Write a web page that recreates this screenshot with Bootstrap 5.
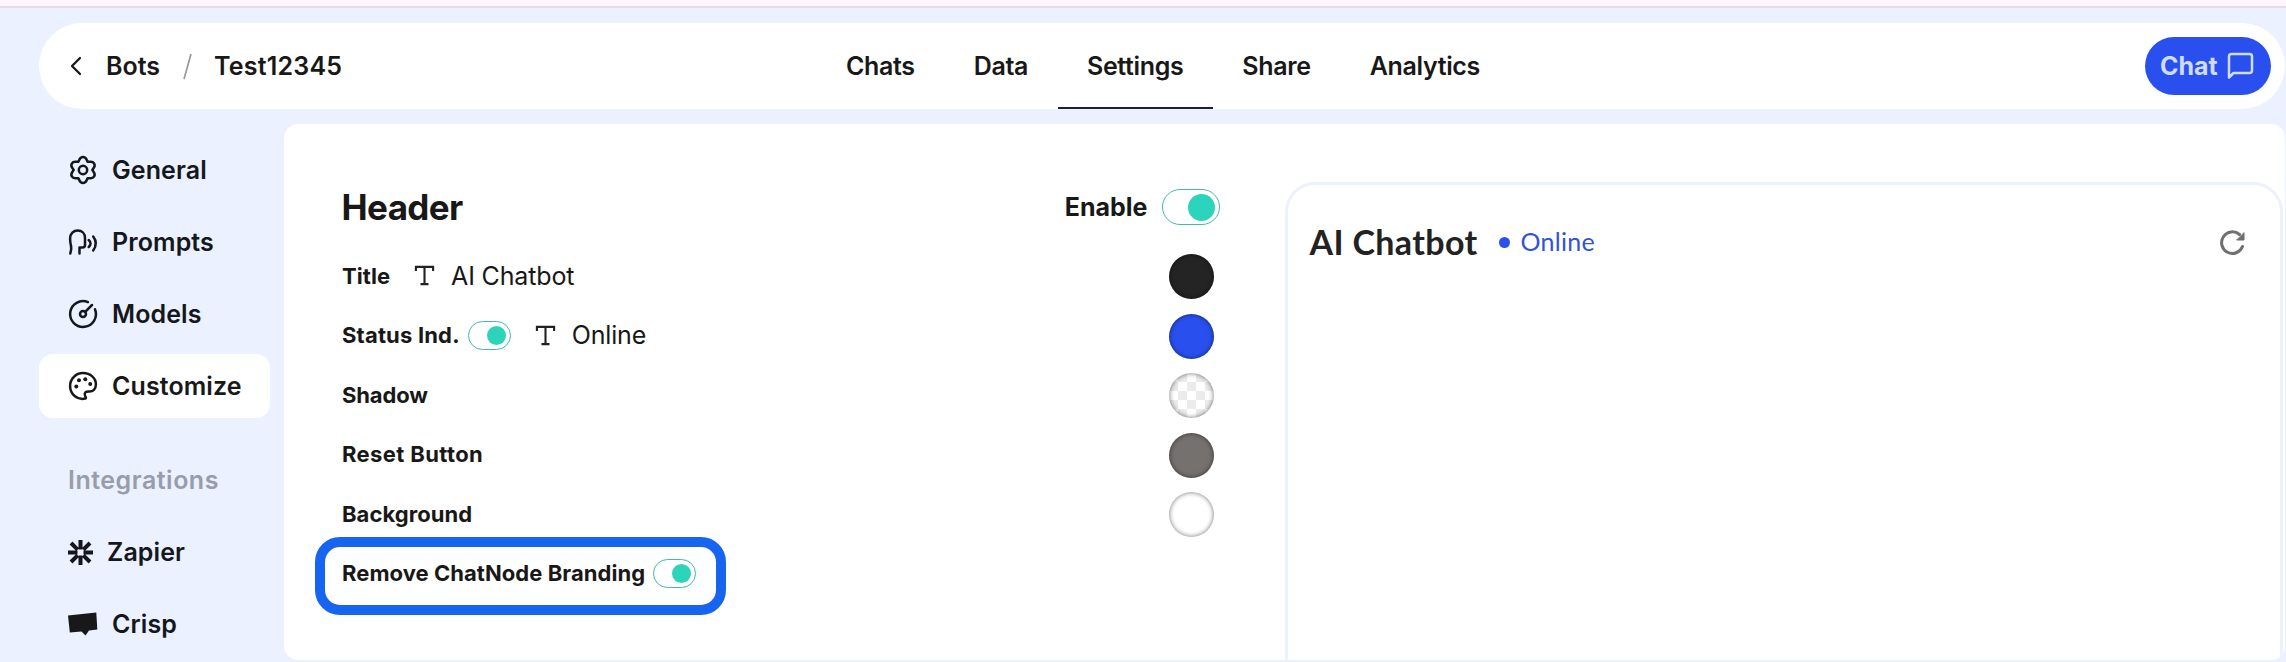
<!doctype html>
<html lang="en">
<head>
<meta charset="utf-8">
<title>Test12345 – Settings</title>
<link href="https://cdn.jsdelivr.net/npm/bootstrap@5.3.0/dist/css/bootstrap.min.css" rel="stylesheet">
<style>
  body { font-family: Inter, "Liberation Sans", sans-serif; font-size: 25px; line-height: 1.2; color: #181818; background: #ebf1fe; height: 662px; overflow: hidden; }
  svg { display: block; flex: none; overflow: visible; }
  .ico { fill: none; stroke: currentColor; stroke-width: 2.5; stroke-linecap: round; stroke-linejoin: round; }
  .strip { height: 8px; background: #fdf6fe; border-bottom: 2px solid #e5dce9; }
  .topbar { display: grid; grid-template-columns: 777.5px auto 1fr; height: 86px; margin: 15px 1px 0 39px; border-radius: 43px; background: #fff; }
  .crumbs { padding-left: 32px; font-weight: 600; gap: 23px; }
  .crumbs .ico { margin-right: 2px; stroke-width: 2.3; }
  .crumb-last { margin-left: -1px; letter-spacing: .2px; }
  .tabs a { padding: 0 29.5px; color: #181818; font-weight: 600; letter-spacing: -.35px; text-decoration: none; border-bottom: 2px solid transparent; border-top: 2px solid transparent; }
  .tabs a.active { border-bottom-color: #20202a; }
  .chat-btn { width: 126px; height: 58px; margin-right: 14px; padding: 0 18px 0 15px; border: 0; border-radius: 29px; background: #2950ef; color: #cfdcfd; font-size: 25px; font-weight: 700; }
  .workarea { padding: 15px 1.5px 0 39px; }
  .sidebar { width: 231px; margin-right: 14px; padding-top: 14px; gap: 8px; }
  .sidebar .item { height: 64px; padding-left: 30px; gap: 15px; border-radius: 14px; font-weight: 600; letter-spacing: .1px; color: #14171c; text-decoration: none; }
  .sidebar .item.zap { padding-left: 29px; gap: 14px; }
  .sidebar .item.active { background: #fff; color: #181818; }
  .sidebar .heading { height: 64px; margin-top: 22px; padding-left: 29px; font-weight: 600; letter-spacing: .5px; color: #979dab; }
  .panel { height: 536px; border-radius: 14px; background: #fff; padding-left: 58px; overflow: hidden; }
  .settings { width: 878px; padding-top: 51px; }
  .settings h1 { font-size: 35px; font-weight: 700; letter-spacing: -.6px; margin: 0 0 0 -.5px; }
  .titlerow { height: 64px; margin-bottom: 7px; }
  .enable { font-weight: 700; letter-spacing: 0; }
  .opt { position: relative; height: 59.5px; padding-right: 6px; }
  .opt .name { font-size: 22px; font-weight: 700; white-space: nowrap; letter-spacing: .05px; }
  .opt .name.tight { letter-spacing: -.15px; }
  .opt .name.wide { letter-spacing: .38px; }
  .opt .name.status { letter-spacing: .18px; }
  .tee { margin-left: 25px; fill: none; stroke: #222; stroke-width: 2.1; }
  .val { letter-spacing: -.15px; margin-left: 17px; }
  .switch { width: 43px; height: 29px; border: 1px solid #45b8a8; border-radius: 15px; padding-right: 4px; margin-left: 8px; }
  .switch i { width: 19px; height: 19px; border-radius: 50%; background: #2bd4bb; }
  .switch.big { width: 58px; height: 36px; border-radius: 18px; margin-left: 14.5px; }
  .switch.big i { width: 27px; height: 27px; }
  .swatch { width: 45px; height: 45px; margin-top: 1.5px; border-radius: 50%; box-shadow: inset 0 0 5px rgba(0,0,0,.55); }
  .sw-black { background: #242424; }
  .sw-blue { background: #2950ef; }
  .sw-gray { background: #74716e; }
  .sw-white { background: #fff; }
  .sw-clear { background: repeating-conic-gradient(#ebebeb 0 25%, #fff 0 50%) 0 0 / 18px 18px; }
  .ring { position: absolute; left: -27px; top: -7px; width: 411px; height: 78px; border: 10px solid #1664ef; border-radius: 25px; }
  .preview { margin: 58px 1.5px 0 65px; border: 3px solid #edf1fe; border-bottom: 0; border-radius: 30px 30px 0 0; font-family: Lato, sans-serif; }
  .preview-head { height: 114px; padding: 0 35px 0 21.5px; }
  .bot { font-size: 34px; font-weight: 700; letter-spacing: .35px; color: #222; }
  .bullet { width: 11px; height: 11px; border-radius: 50%; background: #2950ef; margin: 0 10px 0 22px; }
  .online { color: #3353d6; letter-spacing: .3px; margin-top: -2px; }
</style>
</head>
<body>
<div class="strip"></div>
<header class="topbar">
  <div class="crumbs d-flex align-items-center">
    <svg class="ico" width="10" height="18" viewBox="0 0 10 18"><path d="M9 1 1 9l8 8"/></svg>
    <span>Bots</span>
    <svg width="9" height="27" viewBox="0 0 9 27"><path d="M8 1 1 26" stroke="#999" stroke-width="1.7"/></svg>
    <span class="crumb-last">Test12345</span>
  </div>
  <nav class="tabs d-flex align-items-stretch">
    <a class="d-flex align-items-center" href="#">Chats</a>
    <a class="d-flex align-items-center" href="#">Data</a>
    <a class="d-flex align-items-center active" href="#">Settings</a>
    <a class="d-flex align-items-center" href="#">Share</a>
    <a class="d-flex align-items-center" href="#">Analytics</a>
  </nav>
  <div class="d-flex align-items-center justify-content-end">
    <button class="chat-btn d-flex align-items-center justify-content-between">Chat
      <svg class="ico" width="25" height="26" viewBox="0 0 25 26"><path d="M1 24.500V3.500Q1 1 3.500 1H21.500Q24 1 24 3.500V17.500Q24 20 21.500 20H5.500Z"/></svg>
    </button>
  </div>
</header>
<div class="workarea d-flex">
  <aside class="sidebar d-flex flex-column flex-shrink-0">
    <a class="item d-flex align-items-center" href="#">
      <svg class="ico" width="28" height="28" viewBox="-14 -14 28 28"><defs><path id="tooth" d="M-4.800-8.310C-3.400-9.120-3.900-12.900 0-12.900S3.400-9.120 4.800-8.310"/></defs><use href="#tooth"/><use href="#tooth" transform="rotate(60)"/><use href="#tooth" transform="rotate(120)"/><use href="#tooth" transform="rotate(180)"/><use href="#tooth" transform="rotate(240)"/><use href="#tooth" transform="rotate(300)"/><circle r="4.200"/></svg>
      General</a>
    <a class="item d-flex align-items-center" href="#">
      <svg class="ico" width="28" height="26" viewBox="0 0 28 26"><path d="M1.300 24.500C2.300 21 2.700 19 1.900 16.500C1.200 14 1.100 12 1.100 9.500C1.100 4.500 4.500 1.500 8.700 1.500C13 1.500 16 4.500 16 9V16Q16 18.500 13.500 18.500H10.500V24.500M19.700 11q3.700 3.300 0 7M24.200 7.500q5.200 6.800 0 14"/></svg>
      Prompts</a>
    <a class="item d-flex align-items-center" href="#">
      <svg class="ico" width="28" height="28" viewBox="0 0 28 28"><path d="M26 9.200A12.900 12.900 0 1 1 19 2.100M16.200 11.800 23 5"/><circle cx="14" cy="14" r="3"/></svg>
      Models</a>
    <a class="item active d-flex align-items-center" href="#">
      <svg class="ico" width="28" height="28" viewBox="0 0 28 28"><path d="M16.500 26.500C8 28.500 1.100 22 1.100 14A12.900 12.900 0 0 1 14 1.100C21.500 1.100 26.900 6 26.900 12.300C26.900 17 24 19.800 20 19.500C16.500 19.300 15 20.500 16 23.500C16.600 25.500 17.500 26.200 16.500 26.500Z"/><g fill="currentColor" stroke="none"><circle cx="10" cy="8.300" r="2"/><circle cx="16.300" cy="7.200" r="2"/><circle cx="21.200" cy="12" r="2"/><circle cx="7.300" cy="14.500" r="2"/></g></svg>
      Customize</a>
    <div class="heading d-flex align-items-center">Integrations</div>
    <a class="item zap d-flex align-items-center" href="#">
      <svg width="25" height="25" viewBox="-12.500 -12.500 25 25" stroke="currentColor" stroke-width="4"><path d="M0-12.500V-3M0 3V12.500M-12.500 0H-3M3 0H12.500M-9.500-9.500-2.800-2.800M2.800 2.800 9.500 9.500M-9.500 9.500-2.800 2.800M2.800-2.800 9.500-9.500"/></svg>
      Zapier</a>
    <a class="item d-flex align-items-center" href="#">
      <svg width="28" height="24" viewBox="0 0 28 24" fill="#181818"><path d="M-1 3.500 27.300.5 28.300 17.500 20 18.500 16.500 23.500 12.500 19.500 .8 20.500Z"/></svg>
      Crisp</a>
  </aside>
  <main class="panel d-flex flex-grow-1">
    <section class="settings flex-shrink-0">
      <div class="titlerow d-flex align-items-center justify-content-between">
        <h1>Header</h1>
        <div class="enable d-flex align-items-center">Enable<span class="switch big d-flex align-items-center justify-content-end"><i></i></span></div>
      </div>
      <div class="opt d-flex align-items-center">
        <span class="name">Title</span>
        <svg class="tee" width="19" height="19" viewBox="0 0 19 19"><path d="M.9 5V.9H18.100V5M9.500.9V18.100M5.500 18.100H13.500"/></svg>
        <span class="val">AI Chatbot</span>
        <span class="swatch sw-black ms-auto"></span>
      </div>
      <div class="opt d-flex align-items-center">
        <span class="name status">Status Ind.</span>
        <span class="switch d-flex align-items-center justify-content-end"><i></i></span>
        <svg class="tee" width="19" height="19" viewBox="0 0 19 19"><path d="M.9 5V.9H18.100V5M9.500.9V18.100M5.500 18.100H13.500"/></svg>
        <span class="val">Online</span>
        <span class="swatch sw-blue ms-auto"></span>
      </div>
      <div class="opt d-flex align-items-center"><span class="name tight">Shadow</span><span class="swatch sw-clear ms-auto"></span></div>
      <div class="opt d-flex align-items-center"><span class="name wide">Reset Button</span><span class="swatch sw-gray ms-auto"></span></div>
      <div class="opt d-flex align-items-center"><span class="name">Background</span><span class="swatch sw-white ms-auto"></span></div>
      <div class="opt d-flex align-items-center">
        <span class="name">Remove ChatNode Branding</span>
        <span class="switch d-flex align-items-center justify-content-end"><i></i></span>
        <div class="ring"></div>
      </div>
    </section>
    <section class="preview flex-grow-1">
      <div class="preview-head d-flex align-items-center">
        <span class="bot">AI Chatbot</span><span class="bullet"></span><span class="online">Online</span>
        <svg class="ms-auto" width="25" height="25" viewBox="0 0 25 25" fill="none" stroke="#716f6d" stroke-width="3" stroke-linecap="round"><path d="M22.500 16.500A10.800 10.800 0 1 1 19.500 4.500"/><path d="M24 3V10H17Z" fill="#716f6d" stroke-width="1"/></svg>
      </div>
    </section>
  </main>
</div>
<script src="https://cdn.jsdelivr.net/npm/bootstrap@5.3.0/dist/js/bootstrap.bundle.min.js"></script>
</body>
</html>
